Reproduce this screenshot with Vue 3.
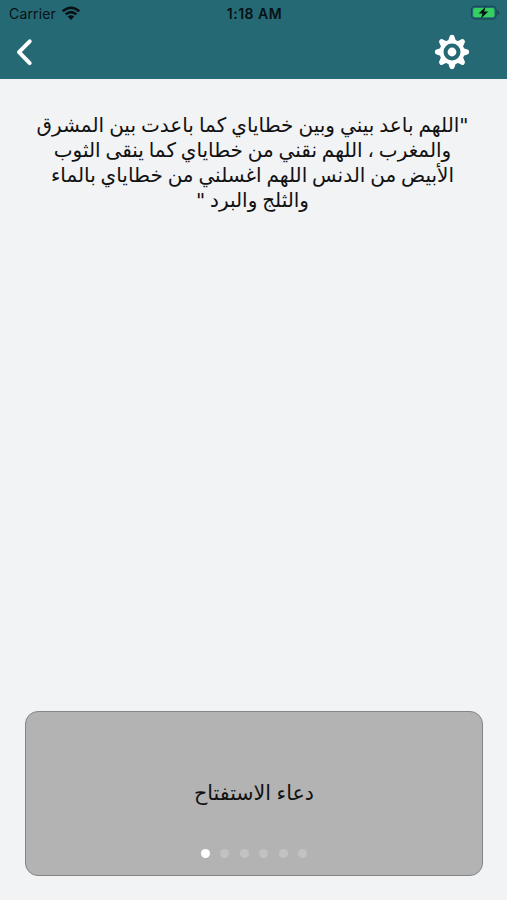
<script setup>
const lines = [
  '"اللهم باعد بيني وبين خطاياي كما باعدت بين المشرق',
  'والمغرب ، اللهم نقني من خطاياي كما ينقى الثوب',
  'الأبيض من الدنس اللهم اغسلني من خطاياي بالماء',
  'والثلج والبرد "',
]
const pages = 6
const current = 1
const teeth = [0, 45, 90, 135, 180, 225, 270, 315]
</script>

<template>
  <div class="screen">
    <header class="header">
      <div class="status">
        <div class="carrier">
          <span>Carrier</span>
          <svg class="wifi" width="20" height="15" viewBox="0 0 20 15">
            <g fill="none" stroke="#071014" stroke-width="2.5">
              <path d="M1.7 5.3Q10-1.7 18.3 5.3" />
              <path d="M4.6 8.4Q10 3.9 15.4 8.4" />
            </g>
            <path d="M6.7 10.6Q10 7.9 13.3 10.6L10 13.9Z" fill="#071014" />
          </svg>
        </div>
        <time class="clock">1:18 AM</time>
        <svg class="battery" width="30" height="16" viewBox="0 0 30 16">
          <rect x="1.5" y="1.3" width="24.6" height="12.6" rx="3.7" fill="none" stroke="#164650" stroke-width="1.1" />
          <rect x="3.2" y="3" width="21.2" height="9.3" rx="1.8" fill="#35cf60" />
          <path d="M27.5 5.2Q29.4 5.8 29.4 7.6T27.5 10Z" fill="#164650" />
          <path d="M15.6 1.8L8.6 8.4H12.5L10.9 13.4L18.3 6.6H14.2Z" fill="#071014" />
        </svg>
      </div>
      <nav class="nav">
        <svg width="18" height="28" viewBox="0 0 18 28">
          <path d="M14.7 3.3L4 14.2L14.7 25.1" fill="none" stroke="#fff" stroke-width="4" stroke-linecap="round" stroke-linejoin="round" />
        </svg>
        <svg width="36" height="36" viewBox="-18 -18 36 36">
          <circle r="10.4" fill="none" stroke="#fff" stroke-width="3.8" />
          <path
            v-for="angle in teeth"
            :key="angle"
            d="M-5-10.8Q-3.2-12-2.7-14.8Q-2.4-17.2 0-17.2T2.7-14.8Q3.2-12 5-10.8Z"
            :transform="`rotate(${angle})`"
            fill="#fff"
          />
          <circle r="4.4" fill="#fff" />
        </svg>
      </nav>
    </header>
    <main class="prayer" dir="rtl" lang="ar">
      <p v-for="line in lines" :key="line">{{ line }}</p>
    </main>
    <section class="card">
      <h1 dir="rtl" lang="ar">دعاء الاستفتاح</h1>
      <div class="dots">
        <i v-for="page in pages" :key="page" :class="{ active: page === current }"></i>
      </div>
    </section>
  </div>
</template>

<style>
body { margin: 0; }
</style>

<style scoped>
.screen {
  box-sizing: border-box;
  height: 900px;
  display: flex;
  flex-direction: column;
  background: #f2f3f5;
  color: #111;
  overflow: hidden;
}
.header {
  height: 79px;
  flex: none;
  background: #256975;
}
.status {
  height: 28px;
  display: grid;
  grid-template-columns: 1fr auto 1fr;
  align-items: center;
  padding: 0 7px 0 9px;
  box-sizing: border-box;
  color: #071014;
  font: 14px/28px Inter, sans-serif;
}
.carrier { display: flex; align-items: center; gap: 5px; letter-spacing: 0.15px; }
.wifi { margin-top: -2px; }
.clock { font-weight: 600; font-size: 14px; letter-spacing: 0.5px; }
.battery { justify-self: end; margin-top: -2px; }
.nav {
  height: 48px;
  display: flex;
  align-items: center;
  justify-content: space-between;
  padding: 0 37px 0 15px;
}
.prayer {
  flex: 1;
  padding: 34px 2px 0 0;
  text-align: center;
  font: 20px/25px "DejaVu Sans", sans-serif;
  word-spacing: -1.5px;
}
.prayer p { margin: 0; white-space: nowrap; }
.prayer p:first-child { word-spacing: -1.3px; }
.card {
  box-sizing: border-box;
  height: 165px;
  flex: none;
  display: flex;
  flex-direction: column;
  align-items: center;
  justify-content: space-between;
  margin: 0 24px 24px 25px;
  padding: 69px 0 17px;
  border: 1px solid #858585;
  border-radius: 13px;
  background: #b3b3b3;
}
h1 {
  margin: 0;
  font: 20.6px/25px "DejaVu Sans", sans-serif;
  word-spacing: -1px;
}
.dots { display: flex; gap: 10.6px; }
.dots i { width: 9px; height: 9px; border-radius: 50%; background: #c1c3c3; }
.dots .active { background: #fff; }
</style>
